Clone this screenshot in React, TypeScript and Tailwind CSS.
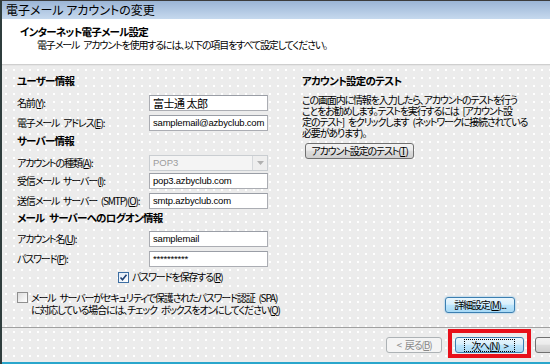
import React from "react";

const jp = "font-['Noto_Sans_CJK_JP',sans-serif] [font-feature-settings:'palt']";
const body = "text-[10px] tracking-[-1.15px]";
const head = "text-[10.5px] tracking-[-0.75px] font-bold";
const dots =
  "bg-[#ececec] [background-image:radial-gradient(circle,#ffffff_0.8px,transparent_1.2px)] [background-size:8px_8px]";
const S = "\u2002";

function U({ children }: { children: React.ReactNode }) {
  return <span className="underline underline-offset-1">{children}</span>;
}

function Heading({ children, className = "" }: { children: React.ReactNode; className?: string }) {
  return (
    <div className={`h-[14px] leading-[14px] ${head} text-black whitespace-nowrap ${className}`}>
      {children}
    </div>
  );
}

function Field({
  label,
  value,
  className = "",
  latin = true,
}: {
  label: React.ReactNode;
  value: string;
  className?: string;
  latin?: boolean;
}) {
  return (
    <div className={`flex items-center h-[16px] ${className}`}>
      <div className={`w-[132px] shrink-0 ${body} leading-[14px] whitespace-nowrap text-black`}>{label}</div>
      <div
        className={`w-[119px] h-[16px] shrink-0 border border-[#abadb3] border-t-[#9a9ea6] bg-white pl-[3px] flex items-center text-black whitespace-nowrap overflow-hidden ${
          latin ? "font-['Liberation_Sans',sans-serif] text-[9.5px] tracking-[-0.2px]" : "text-[11px] tracking-[-0.5px]"
        }`}
      >
        {value}
      </div>
    </div>
  );
}

function CheckBox({ checked }: { checked: boolean }) {
  return (
    <span
      className={`inline-flex w-[11px] h-[11px] shrink-0 items-center justify-center border ${
        checked ? "border-[#3c6ea3] bg-[linear-gradient(135deg,#dfe9f5,#ffffff)]" : "border-[#8f8f8f] bg-[linear-gradient(135deg,#dcdcdc,#ffffff)]"
      }`}
    >
      {checked && (
        <svg width="9" height="9" viewBox="0 0 9 9">
          <path d="M1.5 4.5 L3.5 6.8 L7.5 1.8" fill="none" stroke="#1d3f72" strokeWidth="1.6" />
        </svg>
      )}
    </span>
  );
}

const btnNormal =
  "border border-[#707070] rounded-[3px] bg-[linear-gradient(to_bottom,#f2f2f2_0%,#ebebeb_45%,#dddddd_50%,#cfcfcf_100%)] text-black";
const btnBlue =
  "border border-[#3c7fb1] rounded-[3px] bg-[linear-gradient(to_bottom,#eaf6fd_0%,#d9f0fc_45%,#bee6fd_50%,#a7d9f5_100%)] text-black";

export default function App() {
  return (
    <div className={`w-[550px] h-[364px] overflow-hidden flex flex-col border-l-2 border-l-[#2f3d3d] border-t border-t-[#3c3c3c] ${jp} text-black`}>
      {/* title bar */}
      <div className="h-[18px] shrink-0 bg-[linear-gradient(to_bottom,#9bb5d6,#c6d9ee)] pl-[4px] flex items-center text-[12px] leading-[14px] text-black whitespace-nowrap">
        電子メール アカウントの変更
      </div>

      {/* header */}
      <div className="h-[45px] shrink-0 bg-white pt-[6px] pl-[18px]">
        <div className={`${head} leading-[14px] whitespace-nowrap`}>インターネット電子メール設定</div>
        <div className={`pl-[17px] ${body} leading-[12px] whitespace-nowrap`}>
          電子メール{S}アカウントを使用するには、以下の項目をすべて設定してください。
        </div>
      </div>
      <div className="h-[2px] shrink-0 border-t border-t-[#cfcfcf] bg-[#e4e4e4]" />

      {/* main */}
      <div className={`h-[261px] shrink-0 flex ${dots}`}>
        {/* left column */}
        <div className="w-[285px] shrink-0 pl-[15px] pt-[8px] flex flex-col">
          <Heading>ユーザー情報</Heading>
          <Field className="mt-[7px]" label={<>名前(<U>Y</U>):</>} value="富士通 太郎" latin={false} />
          <Field className="mt-[4px]" label={<>電子メール{S}アドレス(<U>E</U>):</>} value="samplemail@azbyclub.com" />
          <Heading className="mt-[3px]">サーバー情報</Heading>
          <div className="flex items-center h-[16px] mt-[7px]">
            <div className={`w-[132px] shrink-0 ${body} leading-[14px] whitespace-nowrap`}>
              アカウントの種類(<U>A</U>):
            </div>
            <div className="w-[119px] h-[16px] shrink-0 border border-[#c9cdd1] bg-[#f4f4f4] flex items-center">
              <span className="flex-1 pl-[3px] font-['Liberation_Sans',sans-serif] text-[9.5px] text-[#9c9c9c]">POP3</span>
              <span className="w-[15px] h-[14px] border-l border-[#d5d8db] bg-[#eeeeee] flex items-center justify-center">
                <svg width="7" height="4" viewBox="0 0 7 4">
                  <path d="M0 0 L7 0 L3.5 4 Z" fill="#b0b0b0" />
                </svg>
              </span>
            </div>
          </div>
          <Field className="mt-[2px]" label={<>受信メール{S}サーバー(<U>I</U>):</>} value="pop3.azbyclub.com" />
          <Field className="mt-[4px]" label={<>送信メール{S}サーバー{S}(SMTP)(<U>O</U>):</>} value="smtp.azbyclub.com" />
          <Heading className="mt-[2px]">メール{S}サーバーへのログオン情報</Heading>
          <Field className="mt-[6px]" label={<>アカウント名(<U>U</U>):</>} value="samplemail" />
          <Field className="mt-[4px]" label={<>パスワード(<U>P</U>):</>} value="**********" />
          <div className={`flex items-center h-[12px] mt-[4px] pl-[101px] gap-[3px] ${body} leading-[12px] whitespace-nowrap`}>
            <CheckBox checked />
            <span>パスワードを保存する(<U>R</U>)</span>
          </div>
          <div className={`flex items-start mt-[9px] gap-[3px] ${body} leading-[12px] whitespace-nowrap`}>
            <CheckBox checked={false} />
            <span>
              メール{S}サーバーがセキュリティで保護されたパスワード認証{S}(SPA)
              <br />
              に対応している場合には、チェック{S}ボックスをオンにしてください(<U>Q</U>)
            </span>
          </div>
        </div>

        {/* right column */}
        <div className="flex-1 pl-[15px] pt-[8px] flex flex-col items-start">
          <Heading>アカウント設定のテスト</Heading>
          <div className={`mt-[6px] ${body} leading-[11px] whitespace-nowrap`}>
            この画面内に情報を入力したら、アカウントのテストを行う
            <br />
            ことをお勧めします。テストを実行するには{S}[アカウント設
            <br />
            定のテスト]{S}をクリックします{S}(ネットワークに接続されている
            <br />
            必要があります)。
          </div>
          <button className={`mt-[5px] ml-[3px] w-[109px] h-[16px] flex items-center justify-center ${body} leading-[12px] whitespace-nowrap ${btnNormal}`}>
            アカウント設定のテスト(<U>T</U>)
          </button>
          <button className={`mt-[138px] ml-[143px] w-[70px] h-[16px] flex items-center justify-center ${body} leading-[12px] whitespace-nowrap shadow-[0_0_2px_#6fb8e8] ${btnBlue}`}>
            詳細設定(<U>M</U>)...
          </button>
        </div>
      </div>

      {/* bottom separator */}
      <div className="h-[1px] shrink-0 bg-[#a0a0a0]" />

      {/* footer */}
      <div className={`h-[34px] shrink-0 flex items-start pl-[384px] ${dots}`}>
        <button className={`shrink-0 mt-[9px] w-[56px] h-[16px] border border-[#adb2b5] rounded-[3px] bg-[#f4f4f4] text-[#8a8a8a] ${body} leading-[12px] flex items-center justify-center whitespace-nowrap`}>
          &lt;{S}戻る(<U>B</U>)
        </button>
        <div className="shrink-0 ml-[6px] mt-[1px] w-[83px] h-[29px] border-[4px] border-[#e8101a]">
          <button className={`ml-[3px] mt-[4px] w-[69px] h-[16px] flex items-center justify-center ${body} leading-[12px] whitespace-nowrap ${btnBlue}`}>
            <span className="outline-1 outline-dotted outline-black px-[6px] leading-[11px]">
              次へ(<U>N</U>){S}&gt;
            </span>
          </button>
        </div>
        <button className={`shrink-0 ml-[4px] mt-[9px] w-[75px] h-[16px] ${btnNormal}`} />
      </div>

      {/* bottom border */}
      <div className="h-[2px] shrink-0 bg-[#2aa6cc]" />
    </div>
  );
}
